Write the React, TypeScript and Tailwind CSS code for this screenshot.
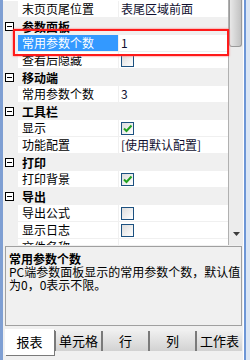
import React from "react";

type Row =
  | { type: "cat"; name: string }
  | { type: "prop"; name: string; value?: string; check?: boolean; selected?: boolean };

const ROWS: Row[] = [
  { type: "prop", name: "末页页尾位置", value: "表尾区域前面" },
  { type: "cat", name: "参数面板" },
  { type: "prop", name: "常用参数个数", value: "1", selected: true },
  { type: "prop", name: "查看后隐藏", check: false },
  { type: "cat", name: "移动端" },
  { type: "prop", name: "常用参数个数", value: "3" },
  { type: "cat", name: "工具栏" },
  { type: "prop", name: "显示", check: true },
  { type: "prop", name: "功能配置", value: "[使用默认配置]" },
  { type: "cat", name: "打印" },
  { type: "prop", name: "打印背景", check: true },
  { type: "cat", name: "导出" },
  { type: "prop", name: "导出公式", check: false },
  { type: "prop", name: "显示日志", check: false },
  { type: "prop", name: "文件名称", value: "" },
];

const TABS = ["单元格", "行", "列", "工作表"];

function CheckBox({ checked }: { checked: boolean }) {
  return (
    <div className="w-[13px] h-[13px] border border-[#1c5180] bg-linear-to-br from-[#dcdcdc] to-white flex items-center justify-center">
      {checked && (
        <svg width="11" height="11" viewBox="0 0 11 11">
          <path d="M2 5.5 L4.5 8 L9.5 2.5" fill="none" stroke="#21a121" strokeWidth="2" />
        </svg>
      )}
    </div>
  );
}

function Collapse() {
  return (
    <div className="w-[9px] h-[9px] border border-black bg-white flex items-center justify-center">
      <div className="w-[5px] h-px bg-black" />
    </div>
  );
}

function GridRow({ row }: { row: Row }) {
  if (row.type === "cat") {
    return (
      <div className="h-[17px] flex items-center bg-[#f0f0f0]">
        <div className="w-[19px] flex justify-start pl-[2px]">
          <Collapse />
        </div>
        <span className="font-bold text-[12px] leading-[16px] text-black">{row.name}</span>
      </div>
    );
  }
  return (
    <div className="h-[17px] flex border-b border-[#f0f0f0]">
      <div className="w-[15px] bg-[#f0f0f0]" />
      <div
        className={
          row.selected
            ? "w-[100px] pl-[4px] bg-[#3399ff] text-white text-[12px] leading-[16px] whitespace-nowrap overflow-hidden"
            : "w-[100px] pl-[4px] bg-white text-black text-[12px] leading-[16px] whitespace-nowrap overflow-hidden"
        }
      >
        {row.name}
      </div>
      <div className="w-px bg-[#f0f0f0]" />
      <div className="flex-1 bg-white pl-[2px] flex items-center text-[12px] leading-[16px] text-[#101030] whitespace-nowrap overflow-hidden">
        {row.check !== undefined ? <CheckBox checked={row.check} /> : row.value}
      </div>
    </div>
  );
}

export default function App() {
  return (
    <div className="w-[250px] h-[360px] flex bg-[#f0f0f0] font-['Noto_Sans_CJK_SC','Noto_Sans',sans-serif] overflow-hidden">
      <div className="w-[3px] bg-[#7f9fd3]" />
      <div className="w-[240px] flex flex-col">
        <div className="h-[245px] flex relative">
          <div className="w-[225px] pt-[1px] overflow-hidden bg-white">
            {ROWS.map((r, i) => (
              <GridRow key={i} row={r} />
            ))}
          </div>
          <div className="w-[15px] flex flex-col bg-[#ececec] border-l border-[#b0b0b0]">
            <div className="h-[47px] mr-[1px] border border-t-0 border-[#9a9a9a] rounded-b-[3px] bg-linear-to-r from-[#e8e8e8] to-[#c2c2c2]" />
            <div className="flex-1" />
            <div className="h-[17px] flex items-start justify-center pt-[4px]">
              <svg width="7" height="4" viewBox="0 0 7 4">
                <path d="M0 0 H7 L3.5 4 Z" fill="#3c3c3c" />
              </svg>
            </div>
          </div>
          <div className="absolute left-[10px] top-[29px] w-[216px] h-[27px] border-2 border-[#ff1a1a] shadow-[0_0_2px_#ff6060]" />
        </div>
        <div className="h-[80px] mt-[1px] ml-[2px] mr-[1px] border border-[#a0a0a0] bg-[#f0f0f0] pl-[3px] pt-[5px] text-[12px] leading-[13px] text-black whitespace-nowrap overflow-hidden">
          <div className="font-bold">常用参数个数</div>
          <div>
            PC端参数面板显示的常用参数个数，默认值
            <br />
            为0，0表示不限。
          </div>
        </div>
        <div className="flex-1 flex pl-[2px] items-start">
          <div className="w-[49px] h-[26px] mt-[3px] bg-white shadow-[1px_1px_0_#7a7a7a] flex items-center justify-center text-[13px] text-black">
            报表
          </div>
          {TABS.map((t) => (
            <div
              key={t}
              className="w-[47px] h-[20px] mt-[5px] border-l-2 border-[#7a7a7a] bg-linear-to-b from-[#efefef] to-[#d2d2d2] flex items-center justify-center text-[13px] text-black"
            >
              {t}
            </div>
          ))}
        </div>
      </div>
      <div className="w-px bg-white" />
      <div className="w-[2px] bg-[#6d96d6]" />
      <div className="w-[4px] bg-[#dbe6f4]" />
    </div>
  );
}
